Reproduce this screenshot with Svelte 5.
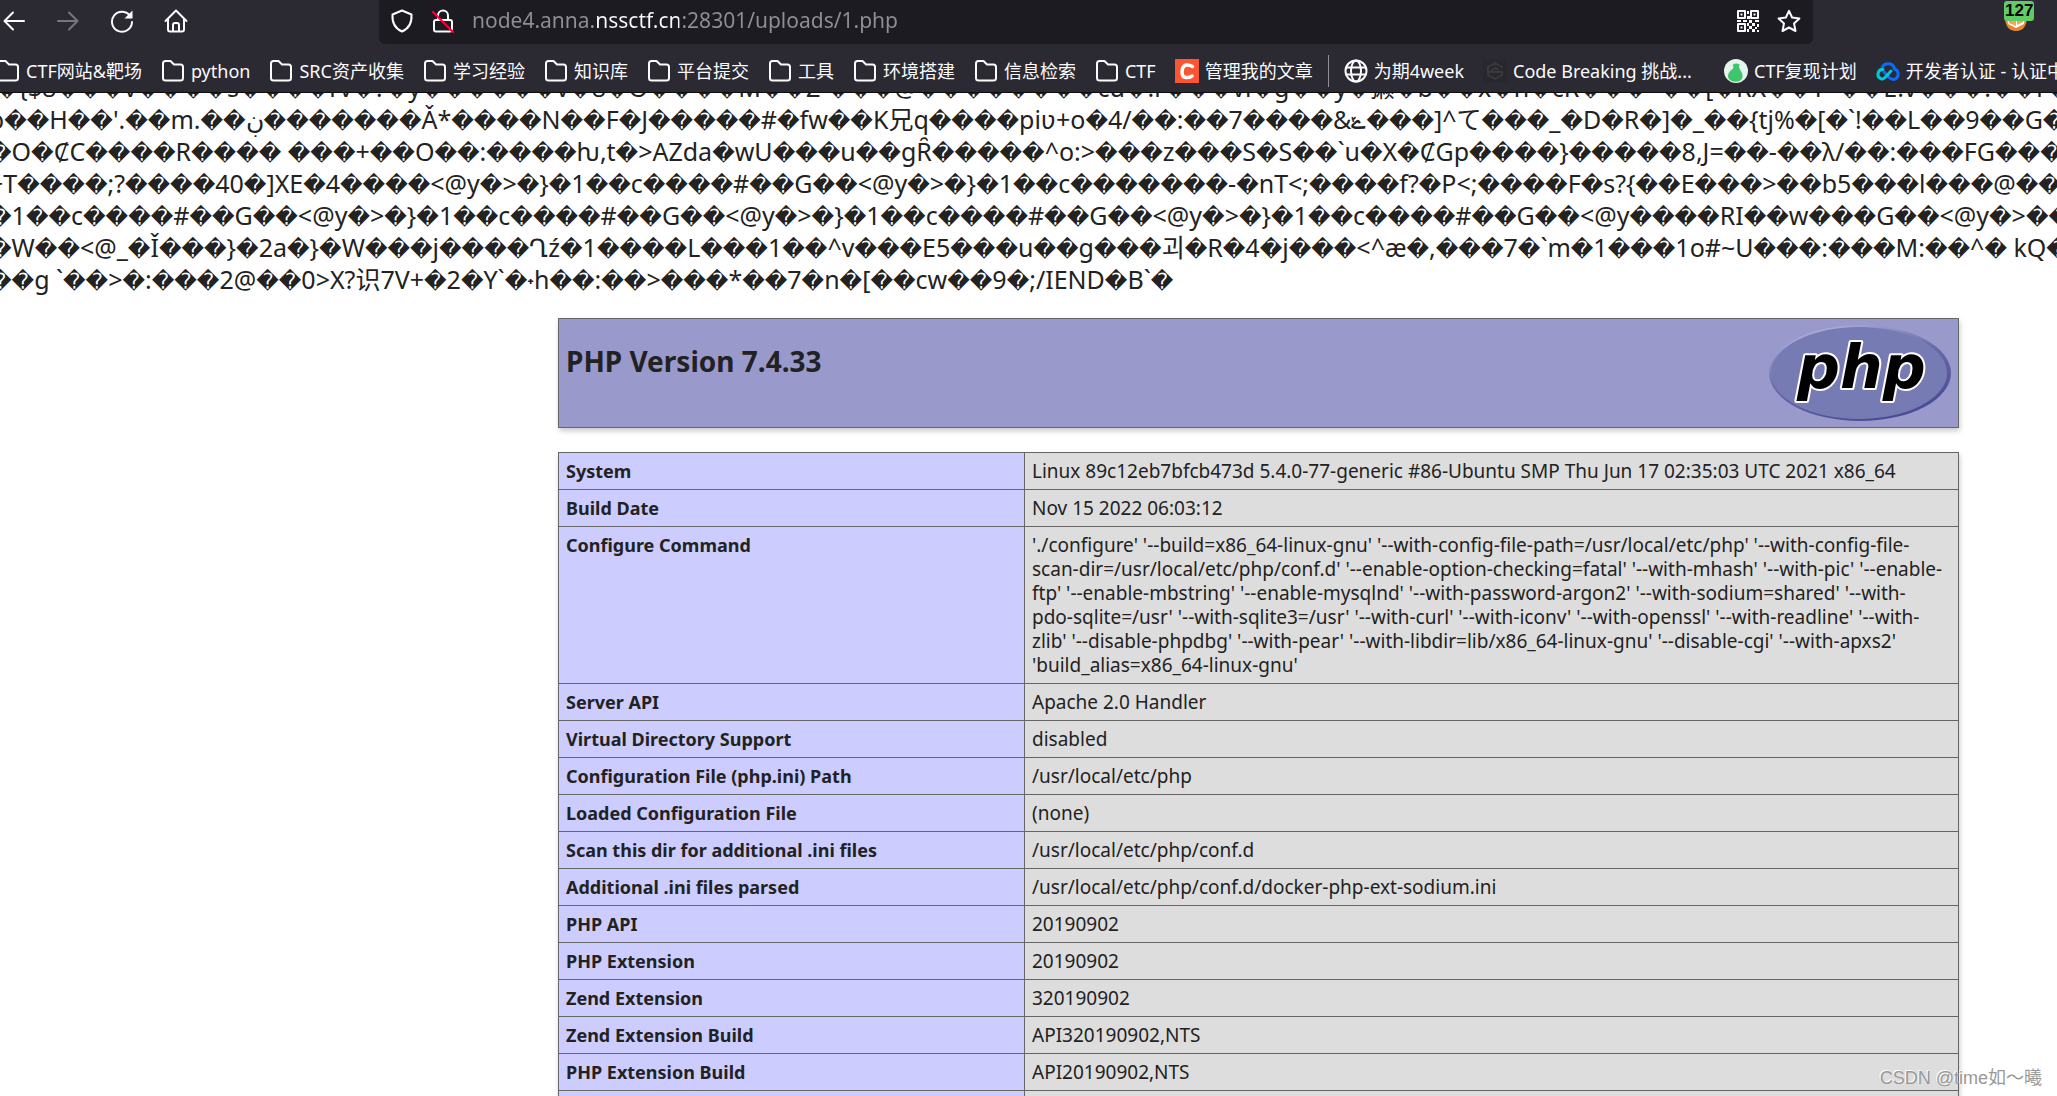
<!-- App.svelte -->
<script>
  let url = $state('node4.anna.nssctf.cn:28301/uploads/1.php');

  const bookmarks = [
    { title: 'CTF网站&靶场', icon: 'folder' },
    { title: 'python', icon: 'folder' },
    { title: 'SRC资产收集', icon: 'folder' },
    { title: '学习经验', icon: 'folder' },
    { title: '知识库', icon: 'folder' },
    { title: '平台提交', icon: 'folder' },
    { title: '工具', icon: 'folder' },
    { title: '环境搭建', icon: 'folder' },
    { title: '信息检索', icon: 'folder' },
    { title: 'CTF', icon: 'folder' },
    { title: '管理我的文章', icon: 'csdn' },
    { title: '', icon: 'divider' },
    { title: '为期4week', icon: 'globe' },
    { title: 'Code Breaking 挑战...', icon: 'hexagon', wide: true },
    { title: 'CTF复现计划', icon: 'pear' },
    { title: '开发者认证 - 认证中心', icon: 'cloud' },
  ];

  // Raw bytes of the uploaded png, as the browser decodes them
  const dump = [
    '.�{$8���v����s����rv�?�y������v�8�O����M��Z ���@��������cu�!r���vi�g��y�獭�b��x�n�cR���  ��[�RX��T  ��E!v���:��r�',
    "o��H��'.��m.��ڹ�������Ǎ*����N��F�J�����#�fw��K兄q����piʋ+o�4/��:��7����&ݺ���]^て���_�D�R�]�_��{tj%�[�`!��L��9��G���",
    '�O�ȻC����R���� ���+��O��:����ƕ,t�>AZda�wU���u��gȒ�����^o:>���z���S�S��`u�X�ȻGp����}�����8,J=��-��λ/��:���FG����',
    '+T����;?����40�]XE�4����<@y�>�}�1��c����#��G��<@y�>�}�1��c�������-�nT<;����f?�P<;����F�s?{��E���>��b5���l���@���',
    '�1��c����#��G��<@y�>�}�1��c����#��G��<@y�>�}�1��c����#��G��<@y�>�}�1��c����#��G��<@y����RI��w���G��<@y�>��',
    '�W��<@_�Ǐ���}�2a�}�W���j����Ղź�1����L���1��^v���E5���u��g���괴�R�4�j���<^æ�,���7�`m�1���1o#~U���:���M:��^� kQ��',
    '��g `��>�:���2@��0>X?识7V+�2�Y`�˖h��:��>���*��7�n�[��cw��9�;/IEND�B`�',
  ].map((line) => line.split(/(�+)/).filter((part) => part !== ''));

  const info = [
    ['System', 'Linux 89c12eb7bfcb473d 5.4.0-77-generic #86-Ubuntu SMP Thu Jun 17 02:35:03 UTC 2021 x86_64'],
    ['Build Date', 'Nov 15 2022 06:03:12'],
    [
      'Configure Command',
      [
        "'./configure' '--build=x86_64-linux-gnu' '--with-config-file-path=/usr/local/etc/php' '--with-config-file-",
        "scan-dir=/usr/local/etc/php/conf.d' '--enable-option-checking=fatal' '--with-mhash' '--with-pic' '--enable-",
        "ftp' '--enable-mbstring' '--enable-mysqlnd' '--with-password-argon2' '--with-sodium=shared' '--with-",
        "pdo-sqlite=/usr' '--with-sqlite3=/usr' '--with-curl' '--with-iconv' '--with-openssl' '--with-readline' '--with-",
        "zlib' '--disable-phpdbg' '--with-pear' '--with-libdir=lib/x86_64-linux-gnu' '--disable-cgi' '--with-apxs2'",
        "'build_alias=x86_64-linux-gnu'",
      ].join('\n'),
    ],
    ['Server API', 'Apache 2.0 Handler'],
    ['Virtual Directory Support', 'disabled'],
    ['Configuration File (php.ini) Path', '/usr/local/etc/php'],
    ['Loaded Configuration File', '(none)'],
    ['Scan this dir for additional .ini files', '/usr/local/etc/php/conf.d'],
    ['Additional .ini files parsed', '/usr/local/etc/php/conf.d/docker-php-ext-sodium.ini'],
    ['PHP API', '20190902'],
    ['PHP Extension', '20190902'],
    ['Zend Extension', '320190902'],
    ['Zend Extension Build', 'API320190902,NTS'],
    ['PHP Extension Build', 'API20190902,NTS'],
    ['Debug Build', 'no'],
  ];
</script>

<div class="window">
  <header>
    <div class="nav">
      <div class="nav-buttons">
        <button aria-label="Back">
          <svg viewBox="0 0 24 24"><path d="M22 12H3M11 3.500L2.500 12l8.500 8.500" /></svg>
        </button>
        <button aria-label="Forward" disabled>
          <svg viewBox="0 0 24 24"><path d="M2 12h19M13 3.500l8.500 8.500-8.500 8.500" /></svg>
        </button>
        <button aria-label="Reload">
          <svg viewBox="0 0 24 24">
            <path d="M20.500 7.500A10 10 0 1 0 22 13" />
            <path d="M22.500 1.500v8h-8z" fill="currentColor" stroke="none" />
          </svg>
        </button>
        <button aria-label="Home">
          <svg viewBox="0 0 24 24">
            <path d="M1.500 12L12 1.500 22.500 12M4 10v10.500q0 2 2 2h12q2 0 2-2V10M9 22v-6q0-2 2-2h2q2 0 2 2v6" />
          </svg>
        </button>
      </div>
      <div class="url-bar">
        <button aria-label="Tracking protection">
          <svg viewBox="0 0 24 24"><path d="M12 1.500l9.500 4c.5 8-2.500 14-9.500 17C5 19.500 2 13.500 2.500 5.500z" /></svg>
        </button>
        <button aria-label="Connection not secure">
          <svg viewBox="0 0 24 24">
            <path d="M7 11V6.500a5 5 0 0 1 10 0V11M5 11h14q2 0 2 2v7.500q0 2-2 2H5q-2 0-2-2V13q0-2 2-2z" />
            <path d="M2 3l20 20" stroke="#ff0039" />
          </svg>
        </button>
        <input type="text" aria-label="Address" bind:value={url} />
        <button aria-label="QR code">
          <svg viewBox="0 0 24 24">
            <path d="M2 2h7v7H2zM15 2h7v7h-7zM2 15h7v7H2z" />
            <path
              fill="currentColor"
              stroke="none"
              d="M4.500 4.500h2v2h-2zM17.500 4.500h2v2h-2zM4.500 17.500h2v2h-2zM11 2h2v3h-2zM11 7h3v3h-3zM1 11h4v2H1zM7 11h4v2H7zM13 11h3v3h-3zM19 11h4v2h-4zM11 14h2v3h-2zM16 14h3v3h-3zM21 15h2v3h-2zM13 17h3v3h-3zM19 18h2v2h-2zM16 20h3v3h-3zM21 21h2v2h-2zM11 20h2v3h-2z"
            />
          </svg>
        </button>
        <button aria-label="Bookmark this page">
          <svg viewBox="0 0 24 24">
            <path d="M12 1.800l3.100 6.700 7.300.9-5.400 5 1.500 7.600L12 18.500 5.500 22 7 14.400l-5.400-5 7.300-.9z" />
          </svg>
        </button>
      </div>
      <button class="extension" aria-label="Extension">
        <svg viewBox="0 0 24 24">
          <path d="M1 8h22q0 15-11 15T1 8z" fill="#e8872b" stroke="none" />
          <path d="M3 9l9 3 9-4-1 8-8 4-8-4z" fill="#fff" stroke="none" />
          <path d="M4 9l8 2.500V18l-7-3zM13 12l6-3v5l-6 3z" fill="#f2a64d" stroke="none" />
        </svg>
        <span class="badge">127</span>
      </button>
    </div>

    <nav class="bookmarks" aria-label="Bookmarks">
      {#each bookmarks as { title, icon, wide }}
        {#if icon === 'divider'}
          <span class="divider"></span>
        {:else}
          <a href="#bookmark" class:wide>
            {#if icon === 'folder'}
              <svg viewBox="0 0 24 24">
                <path d="M2 19V4.500Q2 2 4.500 2h5L13 5.500h6.500Q22 5.500 22 8v11q0 2.500-2.500 2.500h-15Q2 21.500 2 19z" />
              </svg>
            {:else if icon === 'csdn'}
              <svg viewBox="0 0 24 24">
                <rect width="24" height="24" fill="#fc5531" stroke="none" />
                <path d="M17.500 7.500Q10 3.500 7.500 9.500 5.500 18 11 18.500q3 .5 6-1.500" stroke="#fff" stroke-width="3.500" />
              </svg>
            {:else if icon === 'globe'}
              <svg viewBox="0 0 24 24">
                <circle cx="12" cy="12" r="10.500" />
                <ellipse cx="12" cy="12" rx="5" ry="10.500" />
                <path d="M2 8.500h20M2 15.500h20" />
              </svg>
            {:else if icon === 'hexagon'}
              <svg viewBox="0 0 24 24">
                <rect width="24" height="24" fill="#28272e" stroke="none" />
                <path d="M19 8l-7-4-7 4v8l7 4 7-4v-3H7l5-4 3 1.500" stroke="#3a3a3c" />
              </svg>
            {:else if icon === 'pear'}
              <svg viewBox="0 0 24 24">
                <circle cx="12" cy="12" r="12" fill="#e4f5ee" stroke="none" />
                <path
                  d="M8.500 6Q12 3.500 15.500 5.500L15 8q1 3 3 6 2 5-2.500 8-4 1.500-8 0-5-3-3-7.500 1-2.500 4-4.500 2-2 0-4z"
                  fill="#3fc66c"
                  stroke="none"
                />
              </svg>
            {:else}
              <svg viewBox="0 0 24 24">
                <path d="M6 9a6.500 6.500 0 0 1 12.500 1A5.500 5.500 0 0 1 18 20.500q-3 0-5-2L8 13" stroke="#0a6cff" stroke-width="3" />
                <path d="M15 12l-6 6.500Q7 20.500 5.500 20 1.500 19 2 14.500 3 10 7 10.500" stroke="#00c8dc" stroke-width="3" />
              </svg>
            {/if}
            <span>{title}</span>
          </a>
        {/if}
      {/each}
    </nav>
  </header>

  <main>
    <div class="dump">
      {#each dump as line}
        <div class="dump-line">
          {#each line as part}<span class:bad={part[0] === '�'}>{part}</span>{/each}
        </div>
      {/each}
    </div>

    <div class="center">
      <div class="version">
        <h1>PHP Version 7.4.33</h1>
        <a href="http://www.php.net/" aria-label="PHP logo">
          <svg class="logo" viewBox="0 0 182 96">
            <defs>
              <linearGradient id="rim" x1="0.2" y1="0" x2="0.7" y2="1">
                <stop offset="0" stop-color="#b4b5dc" />
                <stop offset="0.45" stop-color="#6a6cab" />
                <stop offset="1" stop-color="#484893" />
              </linearGradient>
            </defs>
            <ellipse cx="91" cy="48" rx="91" ry="48" fill="url(#rim)" />
            <ellipse cx="90" cy="48" rx="88" ry="46" fill="#777bb3" />
            <text x="28" y="63">php</text>
          </svg>
        </a>
      </div>

      <table>
        <tbody>
          {#each info as [name, value]}
            <tr>
              <th scope="row">{name}</th>
              <td>{value}</td>
            </tr>
          {/each}
        </tbody>
      </table>
    </div>
  </main>

  <div class="watermark">CSDN @time如～曦</div>
</div>

<style>
  :global(body) {
    margin: 0;
    background: #fff;
  }
  .window {
    position: relative;
    height: 100vh;
    overflow: hidden;
    color: #222;
    font-family: "Noto Sans", "Noto Sans CJK SC", sans-serif;
  }
  header {
    position: relative;
    z-index: 1;
    background: #2b2a33;
    border-bottom: 1px solid #0c0c0d;
    color: #fbfbfe;
  }
  svg {
    display: block;
    flex: none;
    width: 24px;
    height: 24px;
    fill: none;
    stroke: currentColor;
    stroke-width: 2;
    stroke-linecap: round;
    stroke-linejoin: round;
  }
  button {
    display: block;
    padding: 0;
    border: 0;
    background: none;
    color: inherit;
  }
  button:disabled {
    color: #77767e;
  }

  /* toolbar */
  .nav {
    display: flex;
    align-items: flex-start;
    height: 44px;
  }
  .nav-buttons {
    display: flex;
    gap: 30px;
    padding: 9px 0 0 2px;
    width: 377px;
  }
  .url-bar {
    flex: 1;
    display: flex;
    align-items: center;
    gap: 17px;
    height: 44px;
    padding: 0 12px 0 11px;
    box-sizing: border-box;
    background: #1c1b22;
    border-radius: 0 0 6px 6px;
  }
  .url-bar button {
    margin-bottom: 2px;
  }
  .url-bar input {
    flex: 1;
    min-width: 0;
    padding: 0;
    margin-bottom: 4px;
    border: 0;
    outline: none;
    font: 21px "Noto Sans", sans-serif;
    /* the host stays bright, the rest of the address is dimmed */
    background: linear-gradient(90deg, #8f8f95 124px, #fbfbfe 124px 207px, #8f8f95 207px);
    background-clip: text;
    color: transparent;
  }
  .extension {
    position: relative;
    margin: 8px 29px 0 191px;
  }
  .badge {
    position: absolute;
    left: 0;
    top: -7px;
    padding: 2px 1px;
    border-radius: 3px;
    background: #60cc64;
    color: #000;
    font: bold 17px/16px "Liberation Sans", sans-serif;
  }

  /* bookmarks */
  .bookmarks {
    display: flex;
    align-items: center;
    gap: 19px;
    height: 43px;
    padding-top: 5px;
    margin-left: -4px;
    overflow: hidden;
    white-space: nowrap;
    font-size: 18px;
    line-height: 24px;
  }
  .bookmarks a {
    display: flex;
    flex: none;
    align-items: center;
    gap: 6px;
    color: inherit;
    text-decoration: none;
  }
  .bookmarks .wide {
    width: 222px;
  }
  .divider {
    flex: none;
    width: 1px;
    height: 32px;
    margin: 0 -4px;
    background: #8f8f95;
  }

  /* page */
  .dump {
    margin-top: -22px;
    margin-left: -11px;
    overflow: hidden;
    font-size: 25px;
    line-height: 32px;
  }
  .dump-line {
    height: 32px;
    white-space: pre;
    unicode-bidi: bidi-override;
  }
  .bad {
    font-family: "DejaVu Sans", sans-serif;
    font-size: 22px;
  }
  .center {
    padding: 23px 98px 0 558px;
  }
  .version {
    display: flex;
    justify-content: space-between;
    align-items: flex-start;
    padding: 6px 7px;
    margin-bottom: 24px;
    border: 1px solid #666;
    background: #99c;
    box-shadow: 1px 3px 5px #ccc;
  }
  h1 {
    margin: 18px 0 0;
    font-size: 28px;
    line-height: 36px;
  }
  .logo {
    width: 182px;
    height: 96px;
    stroke: none;
  }
  .logo text {
    font: italic bold 60px "DejaVu Sans", sans-serif;
    fill: #000;
    stroke: #fff;
    stroke-width: 4;
    paint-order: stroke;
  }
  table {
    width: 100%;
    border-collapse: collapse;
    box-shadow: 1px 3px 5px #ccc;
    font-size: 18px;
    line-height: 24px;
  }
  th,
  td {
    padding: 6px 7px;
    border: 1px solid #666;
    text-align: left;
    vertical-align: top;
  }
  th {
    width: 451px;
    background: #ccf;
  }
  td {
    background: #ddd;
    font-size: 19px;
    white-space: pre-line;
  }

  .watermark {
    position: absolute;
    right: 15px;
    bottom: 6px;
    color: #999;
    font: 18px/24px "Liberation Sans", "Noto Sans CJK SC", sans-serif;
    text-shadow: -1px -1px 0 #fff;
  }
</style>
